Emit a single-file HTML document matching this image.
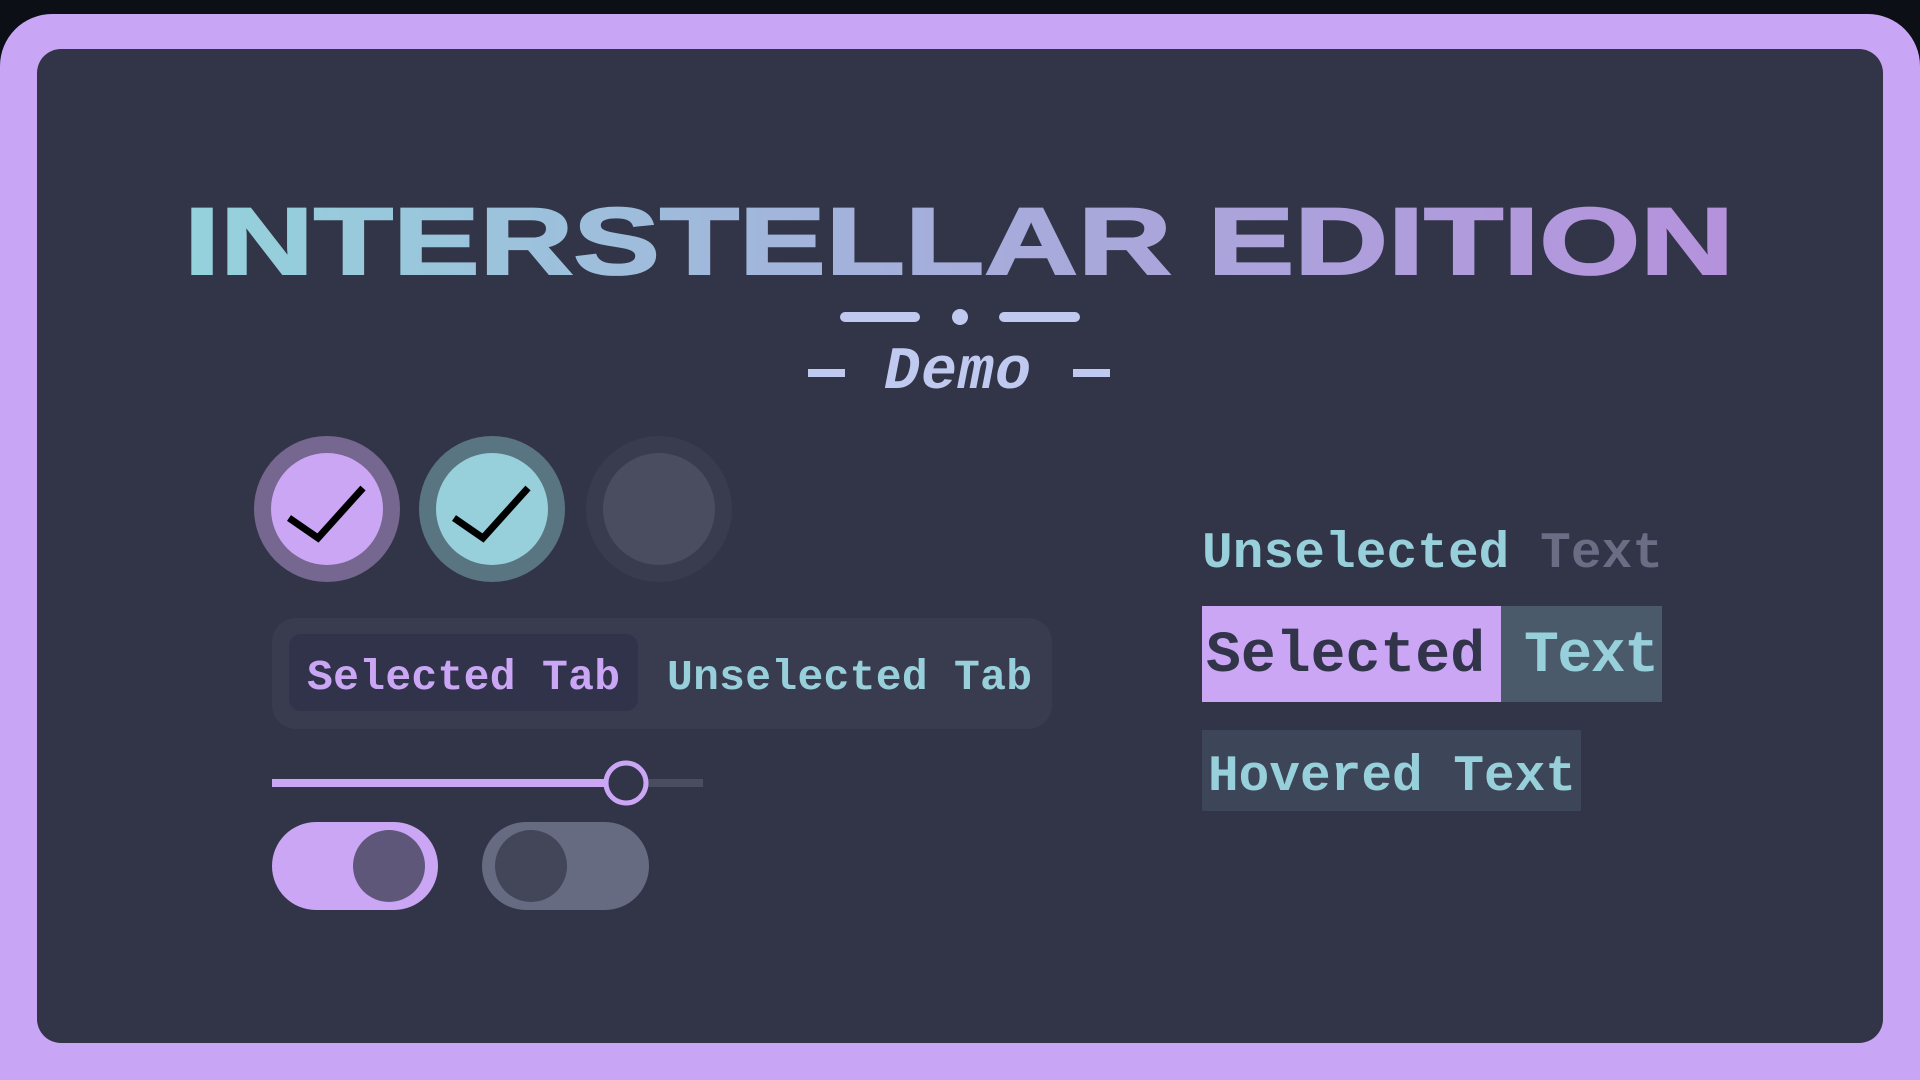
<!DOCTYPE html>
<html><head><meta charset="utf-8"><style>html,body{margin:0;padding:0;background:#0d0f17;width:1920px;height:1080px;overflow:hidden}</style></head>
<body>
<svg width="1920" height="1080" viewBox="0 0 1920 1080" xmlns="http://www.w3.org/2000/svg">
<defs>
<linearGradient id="g" x1="184" y1="0" x2="1734" y2="0" gradientUnits="userSpaceOnUse">
<stop offset="0" stop-color="#94d2dc"/><stop offset="0.5" stop-color="#a6addb"/><stop offset="1" stop-color="#b592dc"/>
</linearGradient>
</defs>
<rect x="0" y="0" width="1920" height="1080" fill="#0d0f17"/>
<rect x="0" y="14" width="1920" height="1120" rx="52" fill="#c9a6f5"/>
<rect x="37" y="49" width="1846" height="994" rx="24" fill="#323447"/>

<text x="184" y="274" textLength="1550" lengthAdjust="spacingAndGlyphs" font-family="Liberation Sans, sans-serif" font-weight="bold" font-size="95" fill="url(#g)" stroke="url(#g)" stroke-width="2">INTERSTELLAR EDITION</text>

<g stroke="#c0c9ef" stroke-width="10" stroke-linecap="round">
<line x1="845" y1="317" x2="915" y2="317"/><line x1="1004" y1="317" x2="1075" y2="317"/>
</g>
<circle cx="960" cy="317" r="8" fill="#c0c9ef"/>
<rect x="808" y="369" width="37" height="8" fill="#c0c9ef"/>
<rect x="1073" y="369" width="37" height="8" fill="#c0c9ef"/>
<text x="884" y="388" font-family="Liberation Mono, monospace" font-style="italic" font-weight="bold" font-size="60" fill="#c0c9ef" textLength="147">Demo</text>

<circle cx="327" cy="509" r="73" fill="#75678f"/><circle cx="327" cy="509" r="56" fill="#caa6f5"/>
<path d="M289 518 L318 538 L363 488" fill="none" stroke="#000" stroke-width="7"/>
<circle cx="492" cy="509" r="73" fill="#5a7582"/><circle cx="492" cy="509" r="56" fill="#97d0da"/>
<path d="M454 518 L483 538 L528 488" fill="none" stroke="#000" stroke-width="7"/>
<circle cx="659" cy="509" r="73" fill="#393b4e"/><circle cx="659" cy="509" r="56" fill="#4a4d60"/>

<rect x="272" y="618" width="780" height="111" rx="24" fill="#393b4e"/>
<rect x="289" y="634" width="349" height="77" rx="12" fill="#31334a"/>
<text x="307" y="689" font-family="Liberation Mono, monospace" font-weight="bold" font-size="43" fill="#caa6f5" textLength="313">Selected Tab</text>
<text x="667" y="689" font-family="Liberation Mono, monospace" font-weight="bold" font-size="43" fill="#97d0da" textLength="365">Unselected Tab</text>

<rect x="272" y="779" width="431" height="8" fill="#4a4d60"/>
<rect x="272" y="779" width="354" height="8" fill="#caa6f5"/>
<circle cx="626" cy="783" r="20" fill="#323447" stroke="#caa6f5" stroke-width="5"/>

<rect x="272" y="822" width="166" height="88" rx="44" fill="#caa6f5"/>
<circle cx="389" cy="866" r="36" fill="#5f577a"/>
<rect x="482" y="822" width="167" height="88" rx="44" fill="#676b82"/>
<circle cx="531" cy="866" r="36" fill="#434659"/>

<text x="1202" y="567" font-family="Liberation Mono, monospace" font-weight="bold" font-size="51" textLength="461"><tspan fill="#97d0da">Unselected </tspan><tspan fill="#6b6d85">Text</tspan></text>

<rect x="1202" y="606" width="300" height="96" fill="#caa6f5"/>
<rect x="1501" y="606" width="161" height="96" fill="#4a5a6a"/>
<text x="1206" y="671" font-family="Liberation Mono, monospace" font-weight="bold" font-size="58" fill="#32344a" textLength="279">Selected</text>
<text x="1524" y="671" font-family="Liberation Mono, monospace" font-weight="bold" font-size="58" fill="#97d0da" textLength="135">Text</text>

<rect x="1202" y="730" width="379" height="81" fill="#3d4658"/>
<text x="1208" y="790" font-family="Liberation Mono, monospace" font-weight="bold" font-size="51" fill="#97d0da" textLength="368">Hovered Text</text>
</svg>
</body></html>
